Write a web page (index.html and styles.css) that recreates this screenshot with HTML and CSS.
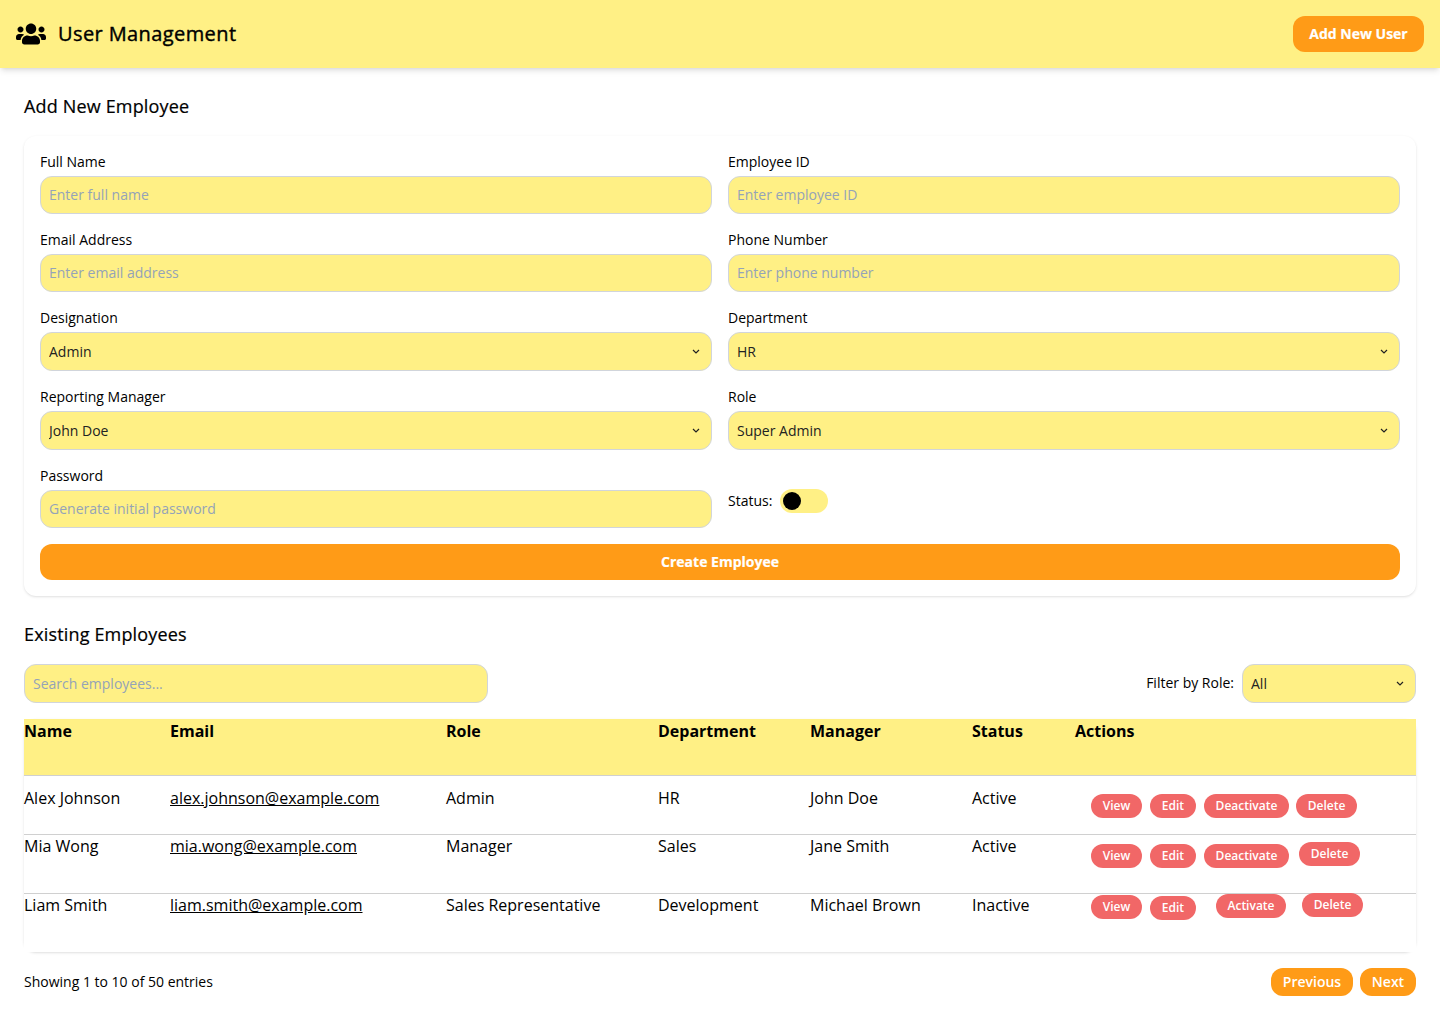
FILE: index.html
```html
<!DOCTYPE html>
<html lang="en">
<head>
<meta charset="utf-8">
<title>User Management</title>
<link rel="stylesheet" href="styles.css">
</head>
<body>
<header class="topbar">
  <div class="brand">
    <svg class="brand-icon" viewBox="0 0 640 512" aria-hidden="true"><path d="M96 224c35.300 0 64-28.700 64-64s-28.700-64-64-64-64 28.700-64 64 28.700 64 64 64zm448 0c35.300 0 64-28.700 64-64s-28.700-64-64-64-64 28.700-64 64 28.700 64 64 64zm32 32h-64c-17.600 0-33.500 7.100-45.100 18.600 40.300 22.100 68.900 62 75.100 109.400h66c17.700 0 32-14.300 32-32v-32c0-35.300-28.700-64-64-64zm-256 0c61.900 0 112-50.100 112-112S381.900 32 320 32 208 82.100 208 144s50.100 112 112 112zm76.800 32h-8.300c-20.800 10-43.900 16-68.500 16s-47.600-6-68.500-16h-8.300C179.600 288 128 339.600 128 403.200V432c0 26.500 21.500 48 48 48h288c26.500 0 48-21.500 48-48v-28.800c0-63.600-51.600-115.200-115.200-115.200zm-223.700-13.400C161.500 263.100 145.600 256 128 256H64c-35.300 0-64 28.700-64 64v32c0 17.700 14.300 32 32 32h65.900c6.300-47.400 34.900-87.300 75.200-109.400z"/></svg>
    <h1 class="brand-title">User Management</h1>
  </div>
  <button class="btn btn-primary add-user">Add New User</button>
</header>
<main class="content">
  <section class="section">
    <h2 class="section-title">Add New Employee</h2>
    <form class="card">
      <div class="fields">
        <label class="field"><span>Full Name</span><input class="control" placeholder="Enter full name"></label>
        <label class="field"><span>Employee ID</span><input class="control" placeholder="Enter employee ID"></label>
        <label class="field"><span>Email Address</span><input class="control" placeholder="Enter email address"></label>
        <label class="field"><span>Phone Number</span><input class="control" placeholder="Enter phone number"></label>
        <label class="field"><span>Designation</span><select class="control select"><option>Admin</option></select></label>
        <label class="field"><span>Department</span><select class="control select"><option>HR</option></select></label>
        <label class="field"><span>Reporting Manager</span><select class="control select"><option>John Doe</option></select></label>
        <label class="field"><span>Role</span><select class="control select"><option>Super Admin</option></select></label>
        <label class="field"><span>Password</span><input class="control" placeholder="Generate initial password"></label>
        <div class="status"><span>Status:</span><span class="toggle"><span class="knob"></span></span></div>
      </div>
      <button type="button" class="btn btn-primary">Create Employee</button>
    </form>
  </section>
  <section class="section">
    <h2 class="section-title">Existing Employees</h2>
    <div class="toolbar">
      <input class="control search" placeholder="Search employees...">
      <label class="filter"><span class="filter-label">Filter by Role:</span><select class="control select role-filter"><option>All</option></select></label>
    </div>
    <table class="employees">
      <colgroup><col class="c-name"><col class="c-email"><col class="c-role"><col class="c-dept"><col class="c-manager"><col class="c-status"><col></colgroup>
      <thead>
        <tr><th>Name</th><th>Email</th><th>Role</th><th>Department</th><th>Manager</th><th>Status</th><th>Actions</th></tr>
      </thead>
      <tbody>
        <tr class="roomy">
          <td>Alex Johnson</td><td><a class="mail">alex.johnson@example.com</a></td><td>Admin</td><td>HR</td><td>John Doe</td><td>Active</td>
          <td><div class="actions first"><button class="pill view">View</button><button class="pill edit">Edit</button><button class="pill toggle-state">Deactivate</button><button class="pill delete">Delete</button></div></td>
        </tr>
        <tr>
          <td>Mia Wong</td><td><a class="mail">mia.wong@example.com</a></td><td>Manager</td><td>Sales</td><td>Jane Smith</td><td>Active</td>
          <td><div class="actions second"><button class="pill view">View</button><button class="pill edit">Edit</button><button class="pill toggle-state">Deactivate</button><button class="pill delete">Delete</button></div></td>
        </tr>
        <tr>
          <td>Liam Smith</td><td><a class="mail">liam.smith@example.com</a></td><td>Sales Representative</td><td>Development</td><td>Michael Brown</td><td>Inactive</td>
          <td><div class="actions third"><button class="pill view">View</button><button class="pill edit">Edit</button><button class="pill toggle-state">Activate</button><button class="pill delete">Delete</button></div></td>
        </tr>
      </tbody>
    </table>
    <div class="pagination">
      <span>Showing 1 to 10 of 50 entries</span>
      <div class="pager"><button class="page-btn previous">Previous</button><button class="page-btn next">Next</button></div>
    </div>
  </section>
</main>
</body>
</html>
```
FILE: styles.css
```css
:root {
  --yellow: #fff085;
  --orange: #ff9b17;
  --red: #f16767;
  --line: #d1d5db;
}
* { box-sizing: border-box; margin: 0; }
body {
  font: 14px/20px "Open Sans", sans-serif;
  color: #000;
  background: #fff;
}
button, input, select { font: inherit; }
button { border: 0; padding: 0; color: #fff; }

.topbar {
  display: flex;
  justify-content: space-between;
  align-items: center;
  padding: 16px;
  background: var(--yellow);
  box-shadow: 0 4px 6px -1px rgba(0, 0, 0, .1), 0 2px 4px -2px rgba(0, 0, 0, .1);
}
.brand { display: flex; align-items: center; gap: 12px; }
.brand-icon { width: 30px; height: 24px; }
.brand-title {
  font-size: 20px;
  line-height: 28px;
  font-weight: 500;
  letter-spacing: .4px;
  -webkit-text-stroke: .4px #000;
}
.btn {
  height: 36px;
  padding: 8px 16px;
  border-radius: 12px;
  font-weight: 700;
  -webkit-text-stroke: .2px #fff;
}
.btn-primary { background: var(--orange); }
.add-user { width: 131px; }

.content { display: flex; flex-direction: column; gap: 24px; padding: 24px; }
.section { display: flex; flex-direction: column; gap: 16px; }
.section-title {
  font-size: 18px;
  line-height: 28px;
  font-weight: 500;
  letter-spacing: .16px;
  -webkit-text-stroke: .2px #000;
}
.card {
  display: flex;
  flex-direction: column;
  gap: 16px;
  padding: 16px;
  border-radius: 12px;
  box-shadow: 0 1px 3px rgba(0, 0, 0, .1), 0 1px 2px -1px rgba(0, 0, 0, .1);
}
.fields { display: grid; grid-template-columns: 1fr 1fr; gap: 16px; }
.field { display: flex; flex-direction: column; gap: 4px; }
.control {
  width: 100%;
  height: 38px;
  padding: 7px 8px 9px;
  border: 1px solid var(--line);
  border-radius: 12px;
  background-color: var(--yellow);
}
.control::placeholder { color: #94a3b8; opacity: 1; }
.select {
  appearance: none;
  height: 39px;
  padding: 8px;
  color: #222;
  background-image: url("data:image/svg+xml,%3Csvg xmlns='http://www.w3.org/2000/svg' width='8' height='6' viewBox='0 0 8 6' fill='none' stroke='%23222' stroke-width='1.2'%3E%3Cpath d='M1 1l3 3 3-3'/%3E%3C/svg%3E");
  background-repeat: no-repeat;
  background-position: right 11.5px top 16px;
}
.status { display: flex; align-items: center; gap: 8px; padding-top: 8px; }
.toggle { width: 48px; height: 24px; padding: 3px; border-radius: 12px; background: var(--yellow); }
.knob { display: block; width: 18px; height: 18px; border-radius: 50%; background: #000; }

.toolbar { display: flex; justify-content: space-between; }
.search { width: 464px; height: 39px; padding: 8px; }
.filter { display: flex; align-items: center; gap: 8px; white-space: nowrap; }
.filter-label { padding-bottom: 2px; }
.role-filter { width: 174px; }

.employees {
  width: 100%;
  table-layout: fixed;
  border-spacing: 0;
  border-radius: 12px;
  font-size: 16px;
  line-height: 24px;
  box-shadow: 0 1px 3px rgba(0, 0, 0, .1), 0 1px 2px -1px rgba(0, 0, 0, .1);
}
.c-name { width: 146px; }
.c-email { width: 276px; }
.c-role { width: 212px; }
.c-dept { width: 152px; }
.c-manager { width: 162px; }
.c-status { width: 103px; }
.employees th { height: 56px; padding: 0; text-align: left; vertical-align: top; font-weight: 700; background: var(--yellow); }
.employees td { height: 59px; padding: 0; vertical-align: top; background: #fff; box-shadow: inset 0 1px #d0d0d0; }
.employees .roomy td { padding-top: 11px; }
.mail { text-decoration: underline; }
.actions { display: flex; align-items: flex-start; height: 24px; padding-left: 16px; }
.pill {
  height: 24px;
  flex: none;
  border-radius: 12px;
  background: var(--red);
  font-size: 12px;
  line-height: 16px;
  font-weight: 600;
}
.view { width: 51px; margin-right: 8px; }
.edit { width: 46px; margin-right: 8px; }
.toggle-state { width: 85px; margin-right: 7px; }
.delete { width: 61px; }
.first { margin-top: 8px; }
.second { margin-top: 10px; }
.second .toggle-state { margin-right: 10px; }
.second .delete { margin-top: -2px; }
.third .view { margin-top: 2px; }
.third .edit { margin-top: 3px; margin-right: 20px; }
.third .toggle-state { width: 70px; margin-top: 1px; margin-right: 16px; }

.pagination { display: flex; justify-content: space-between; align-items: center; }
.pager { display: flex; gap: 7px; }
.page-btn { height: 28px; border-radius: 12px; background: var(--orange); font-weight: 600; }
.previous { width: 82px; }
.next { width: 56px; }
```
